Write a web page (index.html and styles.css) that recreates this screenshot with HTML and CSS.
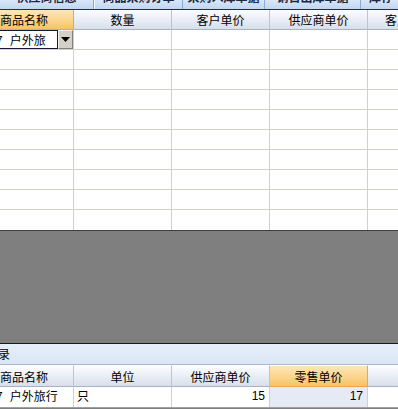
FILE: index.html
```html
<!DOCTYPE html>
<html>
<head>
<meta charset="utf-8">
<link rel="stylesheet" href="styles.css">
</head>
<body>
<div class="page">
  <div class="tabs">
    <div class="tab t1"><span>供应商信息</span></div>
    <div class="tab t2"><span>商品采购订单</span></div>
    <div class="tab t3"><span>采购入库单据</span></div>
    <div class="tab t4"><span>销售出库单据</span></div>
    <div class="tab t5"><span>库存</span></div>
  </div>
  <div class="grid top">
    <div class="row head">
      <div class="cell c1 hl left">商品名称</div>
      <div class="cell c2">数量</div>
      <div class="cell c3">客户单价</div>
      <div class="cell c4">供应商单价</div>
      <div class="cell c5 far">客户</div>
    </div>
    <div class="row data">
      <div class="cell c1 edit">
        <div class="combo">
          <div class="combo-text"><span class="code">7</span>户外旅</div>
          <div class="combo-btn"><svg width="9" height="5" viewBox="0 0 9 5"><path d="M0 0h9L4.5 5z" fill="#000"/></svg></div>
        </div>
      </div>
      <div class="cell c2"></div><div class="cell c3"></div><div class="cell c4"></div><div class="cell c5"></div>
    </div>
    <div class="row data"><div class="cell c1"></div><div class="cell c2"></div><div class="cell c3"></div><div class="cell c4"></div><div class="cell c5"></div></div>
    <div class="row data"><div class="cell c1"></div><div class="cell c2"></div><div class="cell c3"></div><div class="cell c4"></div><div class="cell c5"></div></div>
    <div class="row data"><div class="cell c1"></div><div class="cell c2"></div><div class="cell c3"></div><div class="cell c4"></div><div class="cell c5"></div></div>
    <div class="row data"><div class="cell c1"></div><div class="cell c2"></div><div class="cell c3"></div><div class="cell c4"></div><div class="cell c5"></div></div>
    <div class="row data"><div class="cell c1"></div><div class="cell c2"></div><div class="cell c3"></div><div class="cell c4"></div><div class="cell c5"></div></div>
    <div class="row data"><div class="cell c1"></div><div class="cell c2"></div><div class="cell c3"></div><div class="cell c4"></div><div class="cell c5"></div></div>
    <div class="row data"><div class="cell c1"></div><div class="cell c2"></div><div class="cell c3"></div><div class="cell c4"></div><div class="cell c5"></div></div>
    <div class="row data"><div class="cell c1"></div><div class="cell c2"></div><div class="cell c3"></div><div class="cell c4"></div><div class="cell c5"></div></div>
    <div class="row data last"><div class="cell c1"></div><div class="cell c2"></div><div class="cell c3"></div><div class="cell c4"></div><div class="cell c5"></div></div>
  </div>
  <div class="empty"></div>
  <div class="grid bottom">
    <div class="caption">录</div>
    <div class="row head">
      <div class="cell c1 left">商品名称</div>
      <div class="cell c2">单位</div>
      <div class="cell c3">供应商单价</div>
      <div class="cell c4 hl">零售单价</div>
      <div class="cell c5"></div>
    </div>
    <div class="row data">
      <div class="cell c1 clip"><span class="code">7</span>户外旅行</div>
      <div class="cell c2 text">只</div>
      <div class="cell c3 num">15</div>
      <div class="cell c4 num sel">17</div>
      <div class="cell c5"></div>
    </div>
  </div>
  <div class="foot"></div>
</div>
</body>
</html>
```
FILE: styles.css
```css
* { box-sizing: border-box; }
html, body { margin: 0; padding: 0; }
body {
  width: 398px;
  height: 409px;
  overflow: hidden;
  background: #808080;
  font-family: "Noto Sans CJK SC", "DejaVu Sans", sans-serif;
  font-size: 12px;
  color: #000;
}
.page { width: 398px; height: 409px; display: flex; flex-direction: column; overflow: hidden; }

.tabs {
  height: 10px;
  display: flex;
  background: #c4d8f1;
  border-bottom: 1px solid #22303f;
  overflow: hidden;
  flex-shrink: 0;
}
.tab {
  height: 9px;
  overflow: hidden;
  border-right: 1px solid #8eabd4;
  background: linear-gradient(#d9e7f8, #c2d6f0);
  text-align: center;
  color: #1b2a44;
  font-weight: bold;
  white-space: nowrap;
}
.tab span { display: block; line-height: 14px; margin-top: -10px; }
.t1 { width: 94px; }
.t2 { width: 89px; border-left: 1px solid #eef4fc; }
.t3 { width: 82px; }
.t4 { width: 96px; }
.t5 { flex: 1; border-right: none; text-align: left; padding-left: 8px; }

.grid { background: #fff; overflow: hidden; flex-shrink: 0; }
.row { display: flex; }
.cell {
  border-right: 1px solid #d4d0c8;
  border-bottom: 1px solid #d4d0c8;
  white-space: nowrap;
  overflow: hidden;
}
.c1 { width: 74px; }
.c2 { width: 98px; }
.c3 { width: 98px; }
.c4 { width: 98px; }
.c5 { flex: 1; border-right: none; }

.head .cell {
  height: 20px;
  line-height: 19px;
  text-align: center;
  background: linear-gradient(#fbfcfe, #e6ebf3 60%, #d8dfea);
  border-right: 1px solid #b9c4d6;
  border-bottom: 1px solid #a5b3c8;
  color: #000;
}
.head .cell.left { text-align: left; padding-left: 0; }
.head .cell.far { text-align: left; padding-left: 17px; }
.head .cell.hl {
  background: linear-gradient(#fde7b6, #fbd48e 55%, #f6c266);
  border-right: 1px solid #e6a94c;
  border-bottom: 1px solid #e6a94c;
}
.head .c5 { border-right: none; }

.top .head .cell { height: 20px; }
.data .cell { height: 20px; line-height: 19px; }
.data.last .cell { border-bottom: none; }

.code { display: inline-block; margin-left: -4px; margin-right: 7px; }

.edit { padding: 0; }
.combo { display: flex; height: 19px; }
.combo-text {
  width: 58px;
  border: 1px solid #14183a;
  border-left: none;
  line-height: 17px;
  overflow: hidden;
  white-space: nowrap;
  background: #fff;
}
.combo-btn {
  width: 15px;
  background: #d4d0c8;
  border-top: 1px solid #f4f3ee;
  border-left: 1px solid #f4f3ee;
  border-bottom: 1px solid #808080;
  border-right: 1px solid #808080;
  display: flex;
  align-items: center;
  justify-content: center;
}

.empty {
  height: 113px;
  background: #7f7f7f;
  border-top: 1px solid #3c3c3c;
  flex-shrink: 0;
}

.bottom { border-top: 1px solid #1a1a1a; }
.caption {
  height: 21px;
  line-height: 19px;
  background: linear-gradient(#e6eef9, #dbe6f5);
  border-bottom: 1px solid #a5bad8;
  text-indent: -2px;
}
.bottom .head .cell { height: 22px; line-height: 21px; border-top: 1px solid #fff; }
.bottom .data .cell { height: 20px; line-height: 18px; border-bottom: none; }
.text { padding-left: 3px; }
.num {
  text-align: right;
  padding-right: 4px;
  font-family: "Liberation Sans", Arial, sans-serif;
  font-size: 12px;
}
.sel { background: #e6eaf4; }

.foot { flex: 1; background: #7f7f7f; border-top: 1px solid #a0a0a0; }
```
